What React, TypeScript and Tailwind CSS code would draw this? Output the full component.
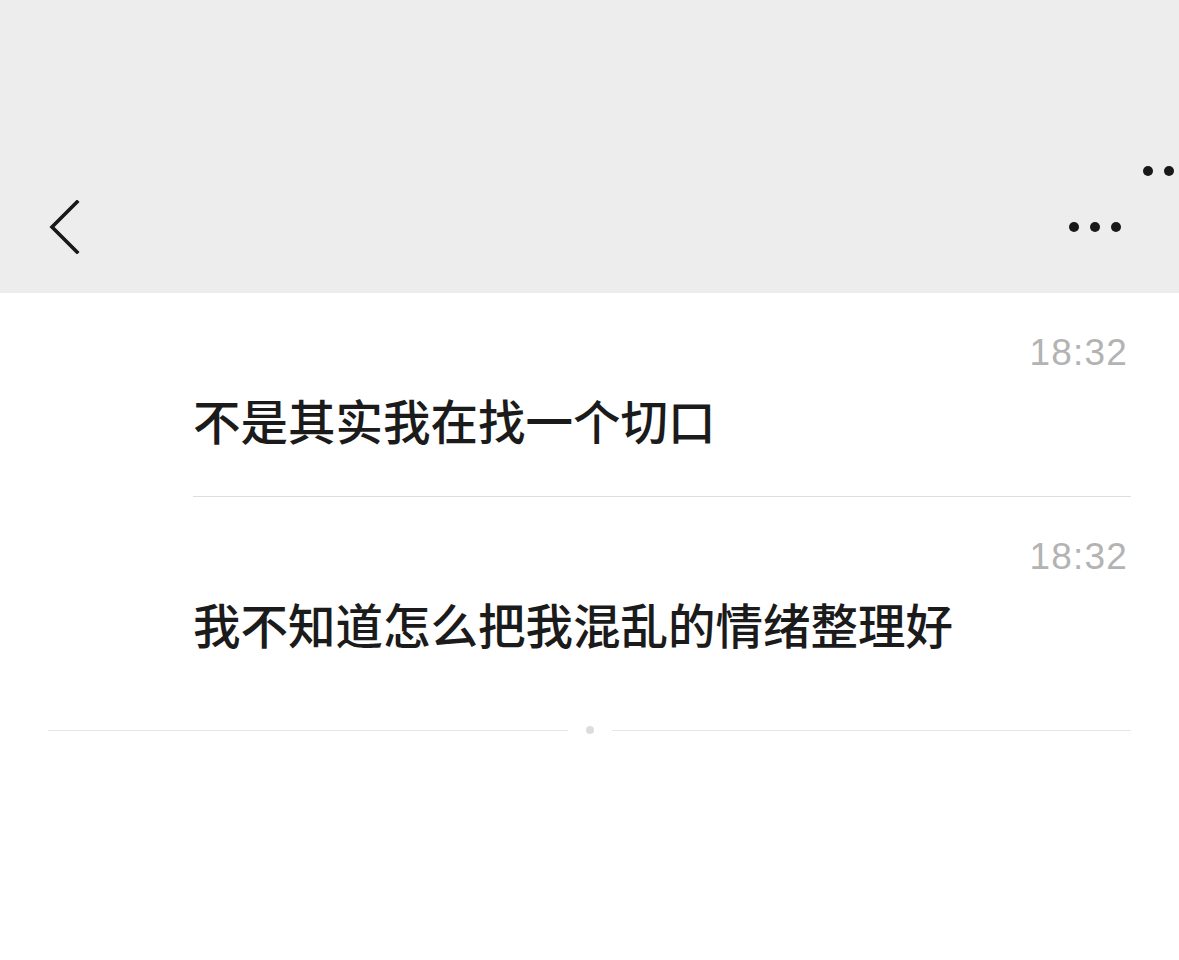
const cjk = { fontFamily: '"Noto Sans CJK SC", "Noto Sans", sans-serif' };
const num = { fontFamily: '"Liberation Sans", Arial, sans-serif' };

const messages = [
  { time: "18:32", text: "不是其实我在找一个切口" },
  { time: "18:32", text: "我不知道怎么把我混乱的情绪整理好" },
];

function Dots() {
  return (
    <div className="flex items-center gap-[11px]">
      <span className="w-[10px] h-[10px] rounded-full bg-[#191919]" />
      <span className="w-[10px] h-[10px] rounded-full bg-[#191919]" />
      <span className="w-[10px] h-[10px] rounded-full bg-[#191919]" />
    </div>
  );
}

export default function App() {
  return (
    <div className="w-[1179px] h-[960px] bg-white overflow-hidden" style={cjk}>
      {/* header */}
      <div className="relative h-[293px] bg-[#ededed]">
        {/* leftover status bar dots */}
        <div className="absolute right-[-16px] top-[166px] flex gap-[11px]">
          <span className="w-[10px] h-[10px] rounded-full bg-[#191919]" />
          <span className="w-[10px] h-[10px] rounded-full bg-[#191919]" />
          <span className="w-[10px] h-[10px] rounded-full bg-[#191919]" />
        </div>
        <div className="absolute left-0 right-0 top-[200px] h-[54px] flex items-center justify-between pl-[49px] pr-[58px]">
          <svg width="32" height="54" viewBox="0 0 32 54" fill="none">
            <path d="M28 2 L3 27 L28 52" stroke="#191919" strokeWidth="3.6" strokeLinecap="square" />
          </svg>
          <Dots />
        </div>
      </div>

      {/* messages */}
      <div className="ml-[193px] mr-[48px]">
        {messages.map((m, i) => (
          <div
            key={i}
            className={
              i === 0
                ? "pt-[41px] pb-[52px] border-b border-[#dedede]"
                : "pt-[41px]"
            }
          >
            <div className="flex justify-end">
              <span className="mr-[3px] text-[37px] leading-none text-[#b3b3b3] tracking-[1.2px]" style={num}>
                {m.time}
              </span>
            </div>
            <p className="mt-[25px] text-[47.5px] leading-none font-medium text-[#1b1b1b]">{m.text}</p>
          </div>
        ))}
      </div>

      {/* end marker */}
      <div className="mt-[79px] mx-[48px] flex items-center gap-[18px]">
        <div className="flex-1 h-px bg-[#e6e6e6]" />
        <span className="w-[8px] h-[8px] rounded-full bg-[#dddddd]" />
        <div className="flex-1 h-px bg-[#e6e6e6]" />
      </div>
    </div>
  );
}
